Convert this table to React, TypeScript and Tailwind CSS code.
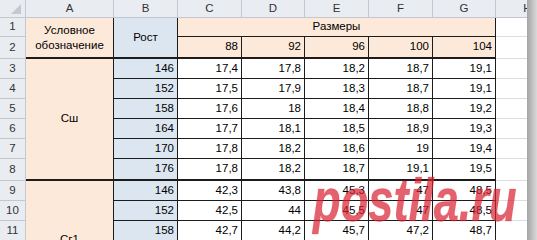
import React from 'react';

type Row = [string, string, string, string, string, string];

const groups: { label: string; rows: Row[] }[] = [
  {
    label: 'Сш',
    rows: [
      ['146', '17,4', '17,8', '18,2', '18,7', '19,1'],
      ['152', '17,5', '17,9', '18,3', '18,7', '19,1'],
      ['158', '17,6', '18', '18,4', '18,8', '19,2'],
      ['164', '17,7', '18,1', '18,5', '18,9', '19,3'],
      ['170', '17,8', '18,2', '18,6', '19', '19,4'],
      ['176', '17,8', '18,2', '18,7', '19,1', '19,5'],
    ],
  },
  {
    label: 'Сг1',
    rows: [
      ['146', '42,3', '43,8', '45,3', '47', '48,5'],
      ['152', '42,5', '44', '45,5', '47', '48,5'],
      ['158', '42,7', '44,2', '45,7', '47,2', '48,7'],
      ['164', '42,9', '44,4', '45,9', '47,4', '48,9'],
      ['170', '43,1', '44,6', '46,1', '47,6', '49,1'],
      ['176', '43,3', '44,8', '46,3', '47,8', '49,3'],
    ],
  },
];

const sizes = ['88', '92', '96', '100', '104'];
const letters = ['A', 'B', 'C', 'D', 'E', 'F', 'G', 'H'];

const head = 'flex items-center justify-center bg-[#e9ecf0] border-r border-b border-[#c3c8d0] text-[#333]';
const grid = 'border-r border-b border-[#dcdee2] bg-white';

export default function App() {
  let rowNo = 2;
  return (
    <div className="relative w-[537px] h-[240px] overflow-hidden bg-white text-[11.5px] text-black" style={{ fontFamily: '"Liberation Sans", Arial, sans-serif' }}>
      <div className="grid w-[560px] grid-cols-[26px_88px_64px_64px_63px_64px_64px_63px_64px] grid-rows-[18px_19px_22px_20px_20px_20px_20px_20px_22px_20px_20px_20px_20px_20px_20px]">
        {/* column headers */}
        <div className={`${head} relative`}>
          <svg className="absolute right-[4px] bottom-[3px]" width="10" height="10" viewBox="0 0 10 10">
            <polygon points="10,0 10,10 0,10" fill="#c5c9cf" />
          </svg>
        </div>
        {letters.map(l => (
          <div key={l} className={head}>{l}</div>
        ))}

        {/* row 1 */}
        <div className={head}>1</div>
        <div className="row-span-2 flex flex-col items-center justify-center bg-[#fde9d9] border-r border-b-2 border-[#1c1c1c] leading-[15px] text-center">
          <span>Условное</span>
          <span>обозначение</span>
        </div>
        <div className="row-span-2 flex items-center justify-center bg-[#dce6f1] border-r border-b-2 border-[#1c1c1c]">Рост</div>
        <div className="col-span-5 flex items-center justify-center bg-[#fde9d9] border-r border-b border-[#1c1c1c]">Размеры</div>
        <div className={grid} />

        {/* row 2 */}
        <div className={head}>2</div>
        {sizes.map(s => (
          <div key={s} className="flex items-center justify-end pr-[3px] bg-[#fde9d9] border-r border-b-2 border-[#1c1c1c]">{s}</div>
        ))}
        <div className={grid} />

        {groups.map(g =>
          g.rows.map((r, i) => {
            rowNo += 1;
            const last = i === g.rows.length - 1;
            return (
              <React.Fragment key={g.label + i}>
                <div className={head}>{rowNo}</div>
                {i === 0 && (
                  <div className="row-span-6 flex items-center justify-center bg-[#fde9d9] border-r border-b-2 border-[#1c1c1c]">{g.label}</div>
                )}
                <div className={`flex items-center justify-end pr-[3px] bg-[#dce6f1] border-r border-[#1c1c1c] ${last ? 'border-b-2' : 'border-b'}`}>{r[0]}</div>
                {r.slice(1).map((v, j) => (
                  <div key={j} className={`flex items-center justify-end pr-[3px] bg-white border-r border-[#1c1c1c] ${last ? 'border-b-2' : 'border-b'}`}>{v}</div>
                ))}
                <div className={grid} />
              </React.Fragment>
            );
          })
        )}
      </div>

      {/* watermark */}
      <div className="absolute left-[313px] top-[169px] origin-left scale-x-[0.73] text-[62px] font-bold italic leading-none text-[#d9202f]/70 whitespace-nowrap [-webkit-text-stroke:1px_rgba(217,32,47,0.2)]">
        postila.ru
      </div>

      {/* window edge shadow */}
      <div className="absolute top-0 right-0 h-full w-[10px] bg-gradient-to-r from-[#a4a4a4] to-[#dadada]" />
    </div>
  );
}
